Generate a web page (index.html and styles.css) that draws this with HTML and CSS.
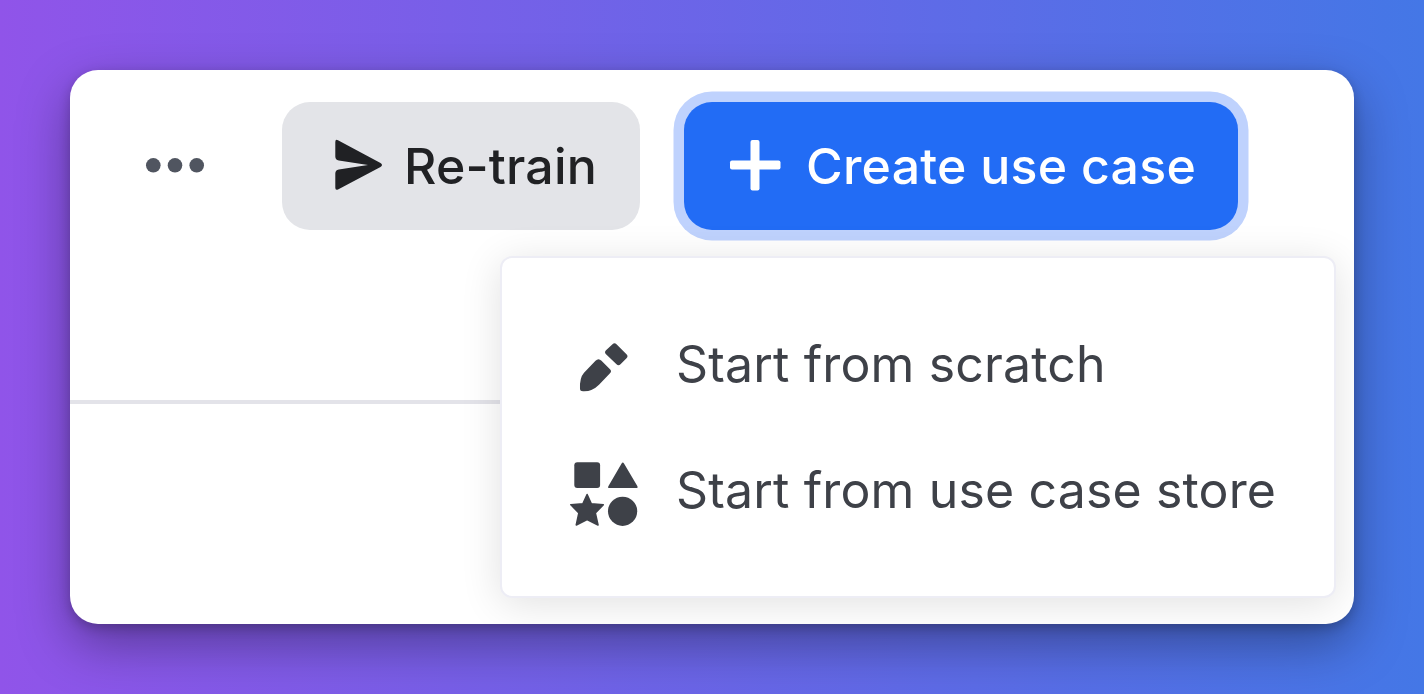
FILE: index.html
```html
<!DOCTYPE html>
<html lang="en">
<head>
    <meta charset="UTF-8">
    <meta name="viewport" content="width=device-width, initial-scale=1.0">
    <title>Create use case</title>
    <link rel="stylesheet" href="styles.css">
</head>
<body>
    <main class="card">
        <div class="toolbar">
            <button type="button" class="more" aria-label="More options">
                <svg width="60" height="18" viewBox="0 0 60 18" fill="currentColor">
                    <circle cx="8.300" cy="8.300" r="7.300"/>
                    <circle cx="30" cy="8.300" r="7.300"/>
                    <circle cx="51.700" cy="8.300" r="7.300"/>
                </svg>
            </button>
            <button type="button" class="btn btn-retrain">
                <svg width="50" height="54" viewBox="0 0 50 54" fill="currentColor">
                    <path d="M1.300 3Q1.300 0 4 1.200L46.500 24Q49.500 26 46.500 28L4 50.500Q1.300 51.700 1.300 48.800V34.500Q1.300 31 4.800 30.400L34 26L4.800 21.600Q1.300 21 1.300 17.500Z"/>
                </svg>
                <span>Re-train</span>
            </button>
            <div class="create">
                <button type="button" class="btn btn-create">
                    <svg width="52" height="54" viewBox="0 0 52 54" fill="currentColor">
                        <rect x="21.500" y="1" width="9" height="50.500" rx="2"/>
                        <rect x="1" y="21.500" width="50.500" height="9" rx="2"/>
                    </svg>
                    <span>Create use case</span>
                </button>
                <!-- Dropdown menu -->
                <div class="menu" role="menu">
                    <div class="menu-item" role="menuitem">
                        <svg width="70" height="70" viewBox="0 -3.800 70 70" fill="currentColor">
                            <path d="M43.500 11.500Q45.500 9.500 47.500 11.500L57.500 21.500Q59.500 23.500 57.500 25.500L51.500 31.500Q49.500 33.500 47.500 31.500L37 21.500Q35 19.500 37 17.500Z"/>
                            <path d="M26.500 28Q29.500 25 32.500 28L41 36.500Q43 38.500 41 40.500L30 52Q23 59 14 58.500Q11 58.500 11 56Q10.500 45 15 40Z"/>
                        </svg>
                        <span>Start from scratch</span>
                    </div>
                    <div class="menu-item" role="menuitem">
                        <svg width="70" height="70" viewBox="-0.300 -1 70 70" fill="currentColor">
                            <rect x="5" y="6.300" width="25.800" height="25.800" rx="3"/>
                            <path d="M52.300 7.500Q53.500 5.600 54.700 7.500L68 30Q69 32 67 32H40Q38 32 39.200 30Z"/>
                            <path d="M17.800 38.500L22 47.800L34 48.700L26 57L28.700 69L17.800 63.500L7 69L9.600 57L1.600 48.700L13.600 47.800Z" stroke="currentColor" stroke-width="1.600" stroke-linejoin="round"/>
                            <circle cx="53.300" cy="55.300" r="14.600"/>
                        </svg>
                        <span>Start from use case store</span>
                    </div>
                </div>
            </div>
        </div>
        <hr>
    </main>
</body>
</html>
```

FILE: styles.css
```css
* {
    box-sizing: border-box;
}

body {
    font-family: Inter, Arial, sans-serif;
    margin: 0;
    padding: 70px;
    height: 694px;
    background: linear-gradient(90deg, #9054e9, #4477e6);
    overflow: hidden;
}

.card {
    height: 554px;
    background-color: white;
    border-radius: 28px;
    box-shadow: 0 20px 52px rgba(0, 0, 0, 0.35), 0 4px 12px rgba(0, 0, 0, 0.2);
    padding-top: 32px;
    overflow: hidden;
}

.toolbar {
    display: flex;
    align-items: center;
    justify-content: flex-end;
    padding-right: 116px;
}

button {
    font-family: inherit;
    border: none;
    cursor: pointer;
}

svg {
    display: block;
    flex-shrink: 0;
    overflow: visible;
}

.more {
    background: none;
    color: #505560;
    padding: 0;
    margin-right: 77px;
}

.btn {
    display: flex;
    align-items: center;
    height: 128px;
    border-radius: 28px;
    font-size: 50px;
    font-weight: 500;
    white-space: nowrap;
}

.btn-retrain {
    width: 358px;
    padding: 0 0 0 52px;
    margin-right: 44px;
    background-color: #e3e4e8;
    color: #202124;
}

.btn-retrain span {
    margin-left: 20px;
    letter-spacing: 0.2px;
}

.create {
    position: relative;
}

.btn-create {
    width: 554px;
    padding: 0 0 0 45px;
    background-color: #226cf5;
    color: white;
    box-shadow: 0 0 0 10.5px #bfd2fd;
}

.btn-create span {
    margin-left: 25px;
    letter-spacing: 0.25px;
}

.menu {
    position: absolute;
    top: 154px;
    right: -98px;
    width: 836px;
    height: 342px;
    padding: 43px 0 0 67px;
    background-color: white;
    border: 2px solid #ededf5;
    border-radius: 12px;
    box-shadow: 0 6px 40px rgba(0, 0, 0, 0.12);
}

.menu-item {
    display: flex;
    align-items: center;
    height: 126px;
    font-size: 50px;
    letter-spacing: 0.15px;
    color: #3e4148;
    white-space: nowrap;
    cursor: pointer;
}

.menu-item span {
    margin-left: 37px;
}

hr {
    width: 430px;
    height: 4px;
    margin: 170px 0 0;
    border: none;
    background-color: #e3e3e9;
}
```
